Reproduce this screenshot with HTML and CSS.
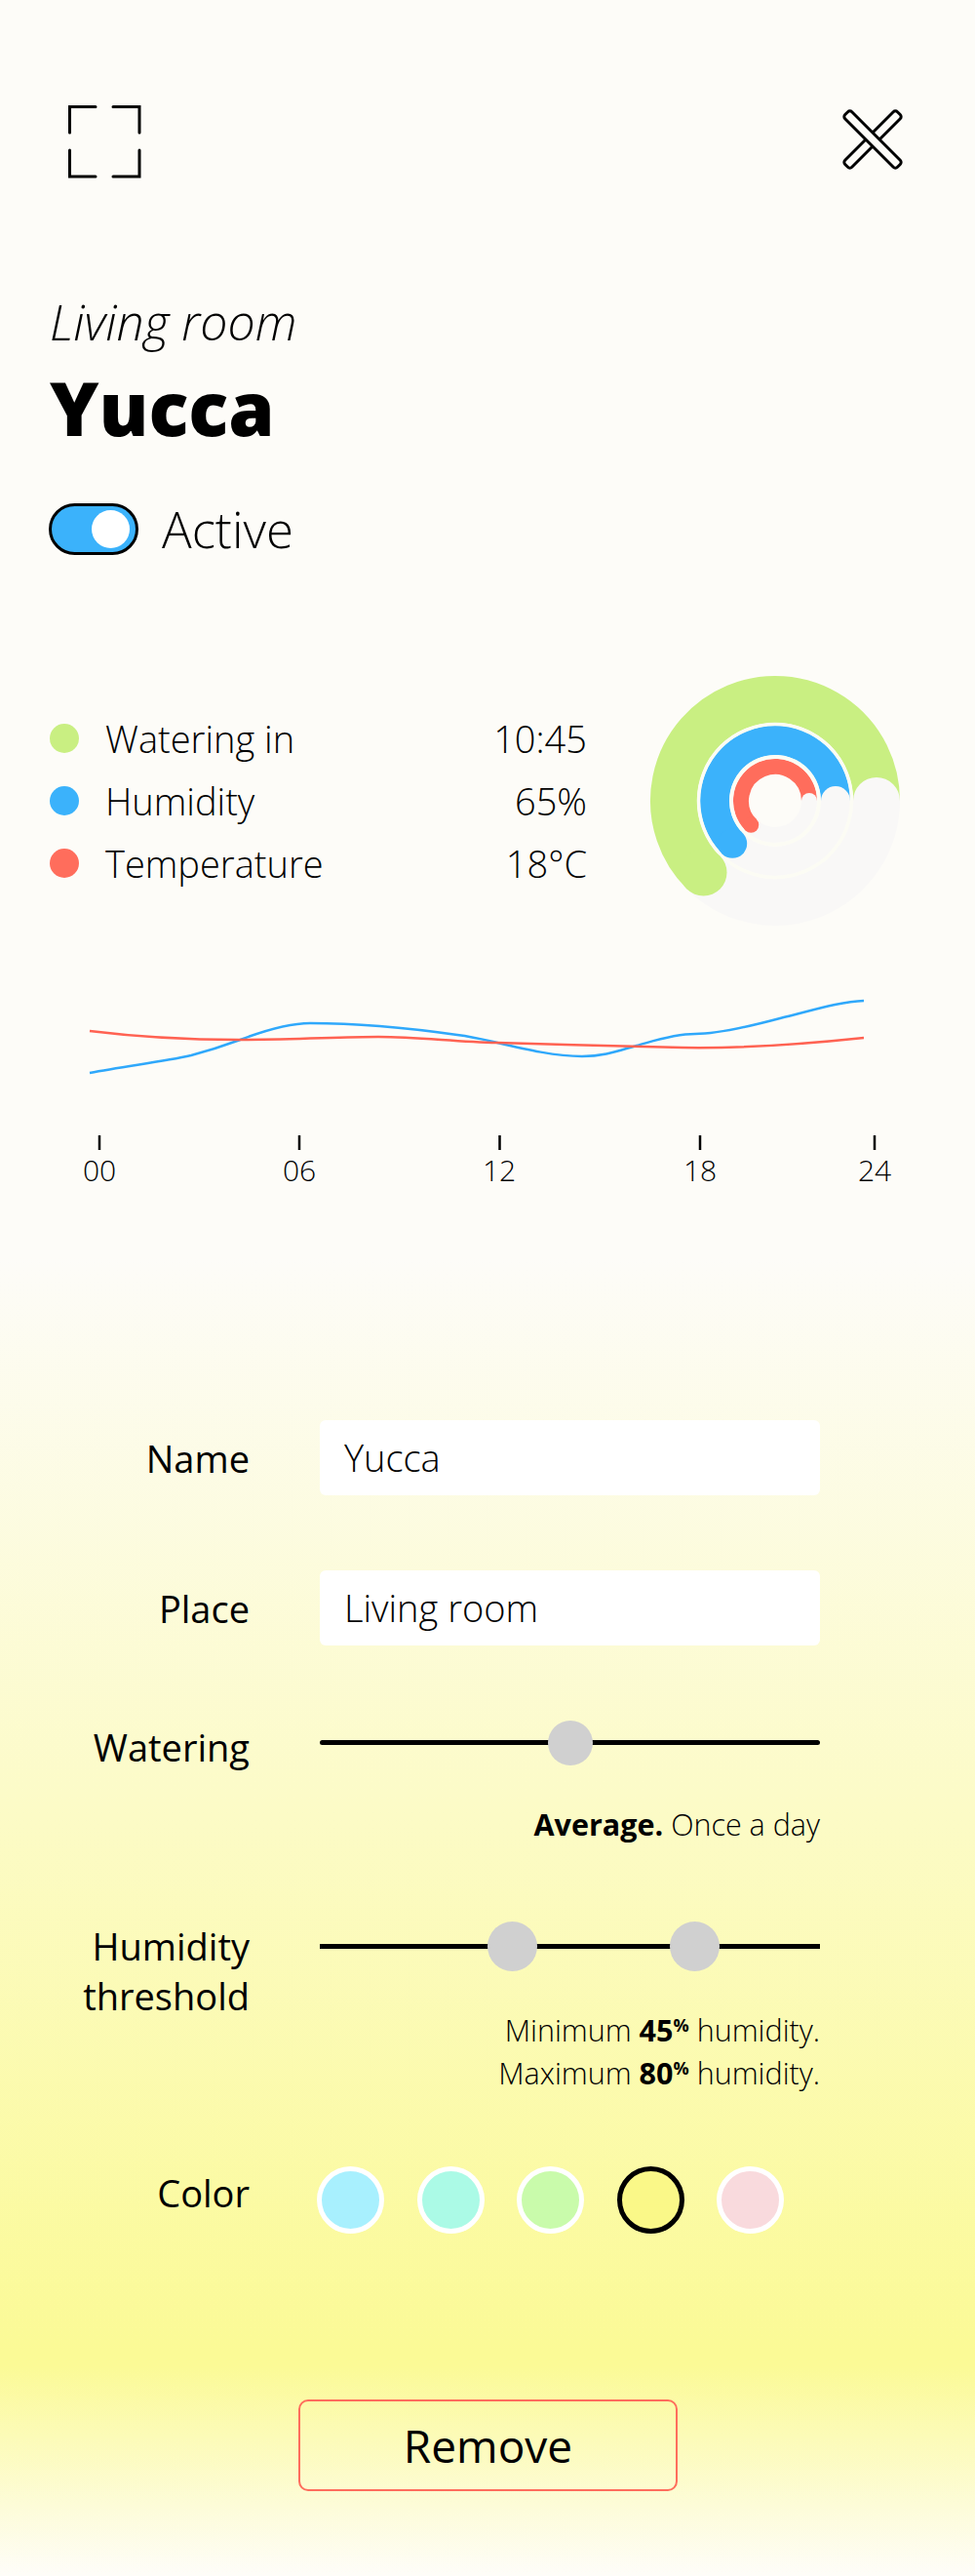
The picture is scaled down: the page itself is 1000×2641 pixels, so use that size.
FILE: index.html
```html
<!DOCTYPE html>
<html lang="en">
<head>
<meta charset="utf-8">
<title>Yucca</title>
<link rel="stylesheet" href="styles.css">
</head>
<body>
<main class="page">
  <header class="topbar">
    <svg class="icon-expand" width="75" height="75" viewBox="0 0 75 75" fill="none" stroke="#000" stroke-width="3" stroke-linecap="round">
      <path d="M1.500 28V1.500H28M46 1.500H73V28M1.500 46V73H28M46 73H73V46"/>
    </svg>
    <svg class="icon-close" width="68" height="68" viewBox="0 0 68 68" fill="#fdfcf8" stroke="#000" stroke-width="3">
      <rect x="-4" y="29" width="76" height="10" rx="3" transform="rotate(-45 34 34)"/>
      <rect x="-4" y="29" width="76" height="10" rx="3" transform="rotate(45 34 34)"/>
    </svg>
  </header>

  <section class="title">
    <p class="place">Living room</p>
    <h1 class="name">Yucca</h1>
    <div class="status">
      <span class="toggle"><span class="knob"></span></span>
      <span class="status-label">Active</span>
    </div>
  </section>

  <section class="stats">
    <div class="legend">
      <span class="dot dot-green"></span><span class="legend-label">Watering in</span><span class="legend-value">10:45</span>
      <span class="dot dot-blue"></span><span class="legend-label">Humidity</span><span class="legend-value">65%</span>
      <span class="dot dot-red"></span><span class="legend-label">Temperature</span><span class="legend-value">18°C</span>
    </div>
    <svg class="ring" width="260" height="260" viewBox="-130 -130 260 260" fill="none">
      <path d="M-73.500 73.500A104 104 0 1 1 104 0" stroke="#c9ef82" stroke-width="48"/>
      <path d="M-43.800 43.800A62 62 0 1 1 62 0" stroke="#3bb2fb" stroke-width="30"/>
      <path d="M-24.750 24.750A35 35 0 1 1 35 0" stroke="#ff6d5c" stroke-width="16"/>
      <path d="M104 0A104 104 0 0 1 -73.500 73.500" stroke="#f9f8f7" stroke-width="48"/>
      <path d="M62 0A62 62 0 0 1 -43.800 43.800" stroke="#f9f8f7" stroke-width="30"/>
      <path d="M35 0A35 35 0 0 1 -24.750 24.750" stroke="#f9f8f7" stroke-width="16"/>
      <circle cx="104" r="24" fill="#f9f8f7"/>
      <circle cx="62" r="15" fill="#f9f8f7"/>
      <circle cx="35" r="8" fill="#f9f8f7"/>
      <circle r="78.500" stroke="#fcfcf4" stroke-width="3.500"/>
      <circle r="45" stroke="#fcfcf4" stroke-width="3.500"/>
      <circle cx="-73.500" cy="73.500" r="24" fill="#c9ef82"/>
      <circle cx="-43.800" cy="43.800" r="15" fill="#3bb2fb"/>
      <circle cx="-24.750" cy="24.750" r="8" fill="#ff6d5c"/>
    </svg>
  </section>

  <svg class="timeline" width="1000" height="240" viewBox="0 1000 1000 240" fill="none">
    <path d="M92 1099C127 1092 165 1088 196 1081C215 1076 230 1071 245 1065.500C270 1056 295 1048 318 1048C370 1048 420 1053 469 1060C485 1062 497 1065 510 1068C540 1075 570 1082 597 1082C620 1082 635 1076 653 1071C668 1067 690 1059 713 1059C735 1059 770 1051 800 1043C830 1036 860 1026 886 1025" stroke="#2fa8fb" stroke-width="2.500"/>
    <path d="M92 1056C140 1062 190 1065 245 1065C300 1065 350 1062 388 1062C430 1062 465 1067 510 1068C570 1070 650 1072 700 1073C760 1074 820 1070 886 1063" stroke="#ff6252" stroke-width="2.500"/>
    <path d="M102 1163V1178M307 1163V1178M512.500 1163V1178M718 1163V1178M897 1163V1178" stroke="#000" stroke-width="2.500"/>
    <g class="tick-label">
      <text x="102" y="1210">00</text>
      <text x="307" y="1210">06</text>
      <text x="512" y="1210">12</text>
      <text x="718" y="1210">18</text>
      <text x="897" y="1210">24</text>
    </g>
  </svg>

  <form class="form">
    <div class="form-label form-label-field">Name</div>
    <div class="field">Yucca</div>

    <div class="form-label form-label-field">Place</div>
    <div class="field">Living room</div>

    <div class="form-label form-label-watering">Watering</div>
    <div class="control">
      <div class="slider slider-single"><span class="thumb thumb-small" style="left:50%"></span></div>
      <p class="hint hint-single"><b>Average.</b> Once a day</p>
    </div>

    <div class="form-label form-label-humidity">Humidity<br>threshold</div>
    <div class="control">
      <div class="slider slider-range"><span class="thumb" style="left:38.500%"></span><span class="thumb" style="left:75%"></span></div>
      <p class="hint hint-range">Minimum <b>45<sup>%</sup></b> humidity.<br>Maximum <b>80<sup>%</sup></b> humidity.</p>
    </div>

    <div class="form-label form-label-color">Color</div>
    <div class="swatches">
      <span class="swatch swatch-sky"></span>
      <span class="swatch swatch-mint"></span>
      <span class="swatch swatch-lime"></span>
      <span class="swatch swatch-selected"></span>
      <span class="swatch swatch-pink"></span>
    </div>
  </form>

  <div class="actions"><button type="button" class="remove">Remove</button></div>
</main>
</body>
</html>
```

FILE: styles.css
```css
* { box-sizing: border-box; }
html, body { margin: 0; padding: 0; }
body {
  font-family: "Open Sans", "Noto Sans", sans-serif;
  color: #000;
  background: #fdfcf8;
}
.page {
  width: 1000px;
  height: 2641px;
  overflow: hidden;
  background: linear-gradient(to bottom, #fdfcf8 0, #fdfcf8 1290px, #fbfa96 2410px, #fbfa96 2425px, #fefdf9 2641px);
}
.topbar {
  display: flex;
  justify-content: space-between;
  height: 300px;
  padding: 108px 71.500px 0 70px;
}
.icon-expand { display: block; }
.icon-close { display: block; margin-top: 1px; }

.title { padding-left: 51px; }
.place {
  margin: 0;
  font-size: 50px;
  font-weight: 300;
  font-style: italic;
  line-height: 60px;
}
.name {
  margin: 8px 0 0;
  font-size: 76px;
  font-weight: 800;
  line-height: 100px;
}
.status {
  display: flex;
  align-items: center;
  gap: 24px;
  margin: 44px 0 0 -1px;
}
.toggle {
  display: flex;
  align-items: center;
  justify-content: flex-end;
  width: 92px;
  height: 53px;
  padding-right: 6px;
  border: 3px solid #000;
  border-radius: 27px;
  background: #3bb2fb;
}
.knob {
  width: 39px;
  height: 39px;
  border-radius: 50%;
  background: #fff;
}
.status-label { font-size: 51px; font-weight: 300; line-height: 60px; }

.stats {
  display: flex;
  align-items: center;
  justify-content: space-between;
  height: 260px;
  margin-top: 119px;
  padding: 0 75px 0 51px;
}
.legend {
  display: grid;
  grid-template-columns: 30px 1fr auto;
  grid-auto-rows: 64px;
  align-items: center;
  width: 551px;
  column-gap: 27px;
  font-size: 38px;
  font-weight: 300;
}
.dot { width: 30px; height: 30px; border-radius: 50%; }
.dot-green { background: #c9ef82; }
.dot-blue { background: #3bb2fb; }
.dot-red { background: #ff6d5c; }
.legend-value { text-align: right; }
.ring { display: block; }

.timeline { display: block; margin-top: 50px; }
.tick-label text {
  font-size: 30px;
  font-weight: 300;
  text-anchor: middle;
  fill: #000;
}

.form {
  display: grid;
  grid-template-columns: 256px 513px;
  column-gap: 72px;
  row-gap: 72px;
  margin-top: 215px;
}
.form-label {
  text-align: right;
  font-size: 38px;
  line-height: 51px;
}
.form-label-field { padding-top: 14px; }
.form-label-watering { padding-top: 1.500px; }
.form-label-humidity { padding-top: 5.500px; }
.form-label-color { padding-top: 4.500px; }
.field {
  height: 77px;
  margin-bottom: 5px;
  padding-left: 25px;
  border-radius: 6px;
  background: #fff;
  font-size: 38px;
  font-weight: 300;
  line-height: 77px;
}
.slider {
  position: relative;
  height: 5px;
  background: #000;
}
.slider-single { margin-top: 20px; border-radius: 3px; }
.slider-range { margin-top: 28.500px; }
.thumb {
  position: absolute;
  top: 50%;
  width: 51px;
  height: 51px;
  margin: -25.500px 0 0 -25.500px;
  border-radius: 50%;
  background: #d0d0d0;
}
.thumb-small {
  width: 46px;
  height: 46px;
  margin: -23px 0 0 -23px;
}
.hint {
  margin: 0;
  text-align: right;
  font-size: 30.500px;
  font-weight: 300;
  line-height: 44px;
}
.hint b { font-weight: 700; }
.hint sup { font-size: 18px; line-height: 0; vertical-align: 10px; }
.hint-single { margin-top: 59px; }
.hint-range { margin-top: 61px; }
.swatches {
  display: flex;
  gap: 33.500px;
  margin: 2px 0 0 -3px;
}
.swatch {
  width: 69px;
  height: 69px;
  border-radius: 50%;
  border: 5px solid #fff;
}
.swatch-sky { background: #a8f0fe; }
.swatch-mint { background: #abfae6; }
.swatch-lime { background: #c9fbab; }
.swatch-selected { border-color: #000; background: #faf888; }
.swatch-pink { background: #f9dadd; }

.actions { padding-left: 306px; margin-top: 170px; }
.remove {
  display: block;
  width: 389px;
  height: 94px;
  padding: 0;
  border: 2.500px solid #ff6d5c;
  border-radius: 10px;
  background: transparent;
  font-family: inherit;
  font-size: 46px;
  color: #000;
}
```
